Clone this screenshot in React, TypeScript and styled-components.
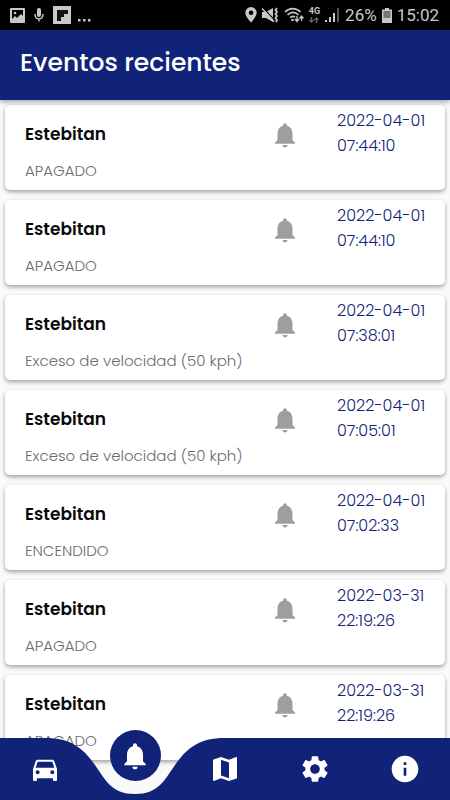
import React from "react";
import styled, { createGlobalStyle } from "styled-components";

const NAVY = "#102378";

const GlobalStyle = createGlobalStyle`
  *, *::before, *::after { box-sizing: border-box; }
  body {
    margin: 0;
    background: #fafafa;
    font-family: Poppins, Inter, sans-serif;
  }
`;

const Screen = styled.div`
  display: flex;
  flex-direction: column;
  height: 100vh;
  overflow: hidden;
`;

const StatusBar = styled.div`
  flex: none;
  display: flex;
  justify-content: space-between;
  height: 30px;
  padding: 0 11px 0 10px;
  background: #000;
  color: #c8c8c8;
  font-family: Roboto, sans-serif;
  font-size: 17px;
`;

const StatusGroup = styled.div<{ $gap: number }>`
  display: flex;
  align-items: center;
  gap: ${(p) => p.$gap}px;
`;

const Network = styled.span`
  display: flex;
  flex-direction: column;
  align-items: center;
  gap: 1px;
  font-size: 9px;
  line-height: 9px;
  font-weight: 700;
`;

const Header = styled.header`
  flex: none;
  position: relative;
  z-index: 1;
  display: flex;
  align-items: center;
  height: 70px;
  padding: 0 20px 4px;
  background: ${NAVY};
  box-shadow: 0 2px 5px rgba(0, 0, 0, 0.35);
`;

const Title = styled.h1`
  margin: 0;
  color: #fff;
  font-size: 25px;
  font-weight: 500;
  line-height: 40px;
`;

const EventList = styled.ul`
  flex: 1;
  min-height: 0;
  margin: 0;
  padding: 5px 5px 70px;
  display: flex;
  flex-direction: column;
  gap: 10px;
  list-style: none;
  overflow-y: auto;
  scrollbar-width: none;
`;

const Card = styled.li`
  flex: none;
  display: grid;
  grid-template-columns: 1fr 30px 125px;
  min-height: 85px;
  padding: 3px 20px 6px;
  border-radius: 5px;
  background: #fff;
  box-shadow: 0 2px 4px rgba(0, 0, 0, 0.36);
`;

const Details = styled.div`
  padding-top: 14px;
`;

const Name = styled.h2`
  margin: 0 0 13px;
  color: #0a0a0a;
  font-size: 17px;
  font-weight: 600;
  line-height: 24px;
`;

const Description = styled.p`
  margin: 0;
  color: #6c6c6c;
  font-size: 15px;
  font-weight: 300;
  line-height: 24px;
  white-space: nowrap;
`;

const BellSlot = styled.div`
  padding-top: 12px;
  color: #9e9e9e;
`;

const Stamp = styled.time`
  padding-left: 37px;
  color: ${NAVY};
  font-size: 16px;
  font-weight: 300;
  line-height: 25px;
  white-space: nowrap;
`;

const StampLine = styled.span`
  display: block;
`;

const Nav = styled.nav`
  position: fixed;
  inset: auto 0 0;
  z-index: 2;
`;

const NavBackdrop = styled.div`
  position: absolute;
  inset: 0;
  display: flex;
`;

const BackdropStart = styled.div`
  flex: none;
  width: calc(30% - 90px);
  background: ${NAVY};
`;

const BackdropEnd = styled.div`
  flex: 1;
  background: ${NAVY};
`;

const Notch = styled.svg`
  flex: none;
  display: block;
`;

const NavItems = styled.div`
  position: relative;
  display: flex;
  height: 62px;
`;

const NavButton = styled.button`
  flex: 1;
  display: flex;
  align-items: center;
  justify-content: center;
  padding: 0;
  border: 0;
  background: none;
  color: #fff;
  cursor: pointer;
`;

const ActiveDisc = styled.span`
  display: flex;
  align-items: center;
  justify-content: center;
  width: 51px;
  height: 51px;
  margin-bottom: 27px;
  border-radius: 50%;
  background: ${NAVY};
`;

const glyphs = {
  bell: "M12 22c1.1 0 2-.9 2-2h-4c0 1.1.89 2 2 2zm6-6v-5c0-3.07-1.64-5.64-4.5-6.32V4c0-.83-.67-1.5-1.5-1.5s-1.5.67-1.5 1.5v.68C7.63 5.36 6 7.92 6 11v5l-2 2v1h16v-1l-2-2z",
  car: "M18.92 6.01C18.72 5.42 18.16 5 17.5 5h-11c-.66 0-1.21.42-1.42 1.01L3 12v8c0 .55.45 1 1 1h1c.55 0 1-.45 1-1v-1h12v1c0 .55.45 1 1 1h1c.55 0 1-.45 1-1v-8l-2.08-5.99zM6.5 16c-.83 0-1.5-.67-1.5-1.5S5.67 13 6.5 13s1.5.67 1.5 1.5S7.33 16 6.5 16zm11 0c-.83 0-1.5-.67-1.5-1.5s.67-1.5 1.5-1.5 1.5.67 1.5 1.5-.67 1.5-1.5 1.5zM5 11l1.5-4.5h11L19 11H5z",
  map: "M20.5 3l-.16.03L15 5.1 9 3 3.36 4.9c-.21.07-.36.25-.36.48V20.5c0 .28.22.5.5.5l.16-.03L9 18.9l6 2.1 5.64-1.9c.21-.07.36-.25.36-.48V3.5c0-.28-.22-.5-.5-.5zM15 19l-6-2.11V5l6 2.11V19z",
  gear: "M19.14 12.94c.04-.3.06-.61.06-.94 0-.32-.02-.64-.07-.94l2.03-1.58c.18-.14.23-.41.12-.61l-1.92-3.32c-.12-.22-.37-.29-.59-.22l-2.39.96c-.5-.38-1.03-.7-1.62-.94l-.36-2.54c-.04-.24-.24-.41-.48-.41h-3.84c-.24 0-.43.17-.47.41l-.36 2.54c-.59.24-1.13.57-1.62.94l-2.39-.96c-.22-.08-.47 0-.59.22L2.74 8.87c-.12.21-.08.47.12.61l2.03 1.58c-.05.3-.09.63-.09.94s.02.64.07.94l-2.03 1.58c-.18.14-.23.41-.12.61l1.92 3.32c.12.22.37.29.59.22l2.39-.96c.5.38 1.03.7 1.62.94l.36 2.54c.05.24.24.41.48.41h3.84c.24 0 .44-.17.47-.41l.36-2.54c.59-.24 1.13-.56 1.62-.94l2.39.96c.22.08.47 0 .59-.22l1.92-3.32c.12-.22.07-.47-.12-.61l-2.01-1.58zM12 15.6c-1.98 0-3.6-1.62-3.6-3.6s1.62-3.6 3.6-3.6 3.6 1.62 3.6 3.6-1.62 3.6-3.6 3.6z",
  info: "M12 2C6.48 2 2 6.48 2 12s4.48 10 10 10 10-4.48 10-10S17.52 2 12 2zm1 15h-2v-6h2v6zm0-8h-2V7h2v2z",
};

type GlyphName = keyof typeof glyphs;

function Glyph({ name, size }: { name: GlyphName; size: number }) {
  return (
    <svg width={size} height={size} viewBox="0 0 24 24" fill="currentColor" aria-hidden="true">
      <path d={glyphs[name]} />
    </svg>
  );
}

function PhoneStatus() {
  return (
    <StatusBar>
      <StatusGroup $gap={7}>
        <svg width="15" height="15" viewBox="0 0 15 15" aria-hidden="true">
          <path fill="#c8c8c8" fillRule="evenodd" d="M1 0h13a1 1 0 0 1 1 1v13a1 1 0 0 1-1 1H1a1 1 0 0 1-1-1V1a1 1 0 0 1 1-1zM2 2v9l3-3 2 2 4-4 2 2V2z" />
          <circle cx="5" cy="5" r="1.3" fill="#c8c8c8" />
        </svg>
        <svg width="14" height="16" viewBox="0 0 14 16" aria-hidden="true">
          <rect x="5" y="1" width="4" height="9" rx="2" fill="#c8c8c8" />
          <path d="M3 7c0 6.500 8 6.500 8 0M7 11.500v3" fill="none" stroke="#c8c8c8" strokeWidth="1.4" />
        </svg>
        <svg width="18" height="18" viewBox="0 0 18 18" aria-hidden="true">
          <path fill="#c8c8c8" d="M0 0h18v18H0z" />
          <path fill="#111" d="M4 4h11v4h-4v3H8v4H4z" />
        </svg>
        <svg width="13" height="14" viewBox="0 0 13 14" fill="#c8c8c8" aria-hidden="true">
          <path d="M0 11h2.5v2.5H0zM5 11h2.5v2.5H5zM10 11h2.5v2.5H10z" />
        </svg>
      </StatusGroup>
      <StatusGroup $gap={5}>
        <svg width="12" height="16" viewBox="0 0 12 16" aria-hidden="true">
          <path fill="#c8c8c8" fillRule="evenodd" d="M6 0a5.7 5.7 0 0 1 5.7 5.7C11.7 9.5 6 15.5 6 15.5S.3 9.5.3 5.7A5.7 5.7 0 0 1 6 0zm0 3.4a2.3 2.3 0 1 0 0 4.6 2.3 2.3 0 0 0 0-4.6z" />
        </svg>
        <svg width="17" height="16" viewBox="0 0 17 16" aria-hidden="true">
          <path fill="#c8c8c8" d="M0 5h4l7-4v14l-7-4H0z" />
          <path d="M1 1l12 12.500" stroke="#000" strokeWidth="1.2" />
          <path d="M0 1.500l12 13" stroke="#c8c8c8" strokeWidth="1.5" />
          <path d="M15 1l-1.500 2L15 5l-1.500 2L15 9l-1.500 2L15 13l-1 2" fill="none" stroke="#c8c8c8" strokeWidth="1.8" />
        </svg>
        <svg width="20" height="16" viewBox="0 0 20 16" aria-hidden="true">
          <path d="M1 5c4.500-4.500 11-4.500 15.500 0M3.500 8c3.500-3.300 7.500-3.300 11 0M6 10.700c2-1.800 3.600-1.800 5-.5" fill="none" stroke="#c8c8c8" strokeWidth="1.7" />
          <circle cx="8.500" cy="13" r="1.300" fill="#c8c8c8" />
          <path d="M13 9v5M11 12l2 2.500 2-2.500M17.500 14v-5M15.500 11.500L17.500 9l2 2.500" fill="none" stroke="#c8c8c8" strokeWidth="1.300" />
        </svg>
        <Network>
          4G
          <svg width="10" height="6" viewBox="0 0 10 6" aria-hidden="true">
            <path d="M2.500 0v5M.5 3l2 2 2-2M7.500 6V1M5.500 3l2-2 2 2" fill="none" stroke="#666" strokeWidth="1.4" />
          </svg>
        </Network>
        <svg width="15" height="16" viewBox="0 0 15 16" aria-hidden="true">
          <path fill="#c8c8c8" d="M0 13h2v2H0zM4 10h2v5H4zM8 6h2v9H8z" />
          <path fill="#555" d="M12 1h2v14h-2z" />
        </svg>
        <span>26%</span>
        <svg width="10" height="15" viewBox="0 0 10 15" aria-hidden="true">
          <path fill="#777" d="M0 2h10v13H0z" />
          <path fill="#c8c8c8" fillRule="evenodd" d="M3 0h4v1.500h3V15H0V1.500h3zM1.500 3v7h7V3z" />
        </svg>
        <span>15:02</span>
      </StatusGroup>
    </StatusBar>
  );
}

const events = [
  { description: "APAGADO", date: "2022-04-01", time: "07:44:10" },
  { description: "APAGADO", date: "2022-04-01", time: "07:44:10" },
  { description: "Exceso de velocidad (50 kph)", date: "2022-04-01", time: "07:38:01" },
  { description: "Exceso de velocidad (50 kph)", date: "2022-04-01", time: "07:05:01" },
  { description: "ENCENDIDO", date: "2022-04-01", time: "07:02:33" },
  { description: "APAGADO", date: "2022-03-31", time: "22:19:26" },
  { description: "APAGADO", date: "2022-03-31", time: "22:19:26" },
];

const tabs: { icon: GlyphName; label: string; active?: boolean }[] = [
  { icon: "car", label: "Vehículos" },
  { icon: "bell", label: "Eventos", active: true },
  { icon: "map", label: "Mapa" },
  { icon: "gear", label: "Ajustes" },
  { icon: "info", label: "Información" },
];

export default function App() {
  return (
    <>
      <GlobalStyle />
      <Screen>
        <PhoneStatus />
        <Header>
          <Title>Eventos recientes</Title>
        </Header>
        <EventList>
          {events.map((event, index) => (
            <Card key={index}>
              <Details>
                <Name>Estebitan</Name>
                <Description>{event.description}</Description>
              </Details>
              <BellSlot>
                <Glyph name="bell" size={30} />
              </BellSlot>
              <Stamp dateTime={`${event.date}T${event.time}`}>
                <StampLine>{event.date}</StampLine>
                <StampLine>{event.time}</StampLine>
              </Stamp>
            </Card>
          ))}
        </EventList>
        <Nav>
          <NavBackdrop>
            <BackdropStart />
            <Notch width="180" height="62" viewBox="0 0 180 62" aria-hidden="true">
              <path fill={NAVY} d="M0 0C26 0 38 10 50 27C61 43 67 56 90 56C113 56 119 43 130 27C142 10 154 0 180 0V62H0Z" />
            </Notch>
            <BackdropEnd />
          </NavBackdrop>
          <NavItems>
            {tabs.map((tab) => (
              <NavButton key={tab.icon} type="button" aria-label={tab.label} aria-current={tab.active ? "page" : undefined}>
                {tab.active ? (
                  <ActiveDisc>
                    <Glyph name={tab.icon} size={32} />
                  </ActiveDisc>
                ) : (
                  <Glyph name={tab.icon} size={32} />
                )}
              </NavButton>
            ))}
          </NavItems>
        </Nav>
      </Screen>
    </>
  );
}
